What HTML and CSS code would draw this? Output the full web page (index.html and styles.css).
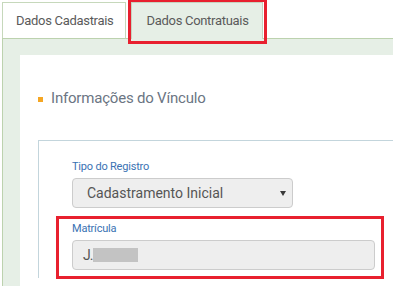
FILE: index.html
```html
<!DOCTYPE html>
<html lang="pt-BR">
<head>
<meta charset="utf-8">
<link rel="stylesheet" href="styles.css">
</head>
<body>
<div class="wrap">
  <div class="tabs">
    <div class="tab">Dados Cadastrais</div>
    <div class="tab active">Dados Contratuais</div>
  </div>
  <div class="content">
    <div class="panel">
      <h2 class="heading"><span class="bullet"></span>Informações do Vínculo</h2>
      <div class="fieldset">
        <div class="group">
          <div class="label">Tipo do Registro</div>
          <div class="select">Cadastramento Inicial<span class="caret"></span></div>
        </div>
        <div class="group second">
          <div class="label">Matrícula</div>
          <div class="input"><span class="val">J.</span><span class="blur"></span></div>
        </div>
      </div>
    </div>
  </div>
</div>
<div class="mark mark-tab"></div>
<div class="mark mark-field"></div>
</body>
</html>
```
FILE: styles.css
```css
html, body {
  margin: 0;
  padding: 0;
  background: #ffffff;
  overflow: hidden;
  height: 286px;
}
body {
  font-family: Roboto, "Liberation Sans", sans-serif;
  position: relative;
}
.wrap {
  margin-left: 2px;
  width: 391px;
}
.tabs {
  display: flex;
  align-items: flex-end;
  gap: 5px;
  height: 38px;
  border-bottom: 1px solid #bcd2ae;
}
.tab {
  height: 35px;
  line-height: 35px;
  padding: 0 12px 0 13px;
  border: 1px solid #c6d8bb;
  border-bottom: none;
  background: #ffffff;
  color: #5a5a5a;
  font-size: 13px;
  letter-spacing: -0.3px;
}
.tab.active {
  background: #e6efe6;
  padding: 0 13px 0 14px;
  margin-bottom: -1px;
  height: 36px;
  border-color: #c6d4c0;
}
.content {
  border-left: 1px solid #bcd2ae;
  background: #e6efe6;
  padding: 16px 0 0 17px;
  height: 231px;
  overflow: hidden;
}
.panel {
  background: #ffffff;
  width: 400px;
  height: 231px;
  padding: 33px 0 0 18px;
  box-sizing: border-box;
}
.heading {
  margin: 0;
  display: flex;
  align-items: center;
  font-size: 15px;
  letter-spacing: -0.2px;
  line-height: 20px;
  font-weight: normal;
  color: #6b7583;
}
.bullet {
  width: 5px;
  height: 5px;
  background: #f5a623;
  margin-right: 8px;
  margin-top: 2px;
}
.fieldset {
  margin-top: 32px;
  width: 321px;
  border-top: 1px solid #c3d5dc;
  border-left: 1px solid #c3d5dc;
  padding: 18px 0 8px 33px;
}
.label {
  font-size: 11px;
  letter-spacing: -0.2px;
  line-height: 15px;
  color: #3a72b3;
  margin-bottom: 4px;
}
.group.second {
  margin-top: 13px;
}
.select {
  width: 205px;
  height: 28px;
  line-height: 28px;
  border: 1px solid #cccccc;
  border-radius: 4px;
  background: #eeeeee;
  color: #555555;
  font-size: 14px;
  padding-left: 14px;
  display: flex;
  justify-content: space-between;
  align-items: center;
}
.caret {
  width: 0;
  height: 0;
  border-left: 3px solid transparent;
  border-right: 3px solid transparent;
  border-top: 5px solid #3a3a3a;
  margin-right: 6px;
  margin-top: 1px;
}
.input {
  width: 291px;
  height: 28px;
  line-height: 28px;
  border: 1px solid #cccccc;
  border-radius: 4px;
  background: #eeeeee;
  color: #555555;
  font-size: 14px;
  padding-left: 10px;
  display: flex;
  align-items: center;
}
.val {
  letter-spacing: -1px;
}
.blur {
  display: inline-block;
  width: 45px;
  height: 14px;
  background: #c3c3c3;
  margin-left: 1px;
}
.mark {
  position: absolute;
  border: 3px solid #e8202f;
  box-sizing: border-box;
}
.mark-tab {
  left: 128px;
  top: -1px;
  width: 139px;
  height: 45px;
}
.mark-field {
  left: 56px;
  top: 216px;
  width: 328px;
  height: 63px;
}
```
